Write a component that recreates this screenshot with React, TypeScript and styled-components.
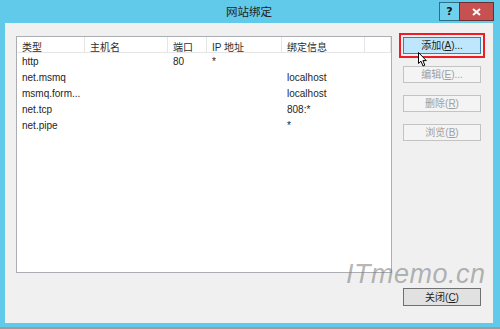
import React from "react";
import styled, { createGlobalStyle } from "styled-components";

const GlobalStyle = createGlobalStyle`
  html, body {
    margin: 0;
    padding: 0;
    background: #9c9c9c;
  }
  body {
    font-family: "Liberation Sans", "Noto Sans CJK SC", sans-serif;
    font-size: 10px;
    color: #1e1e1e;
  }
`;

interface Binding {
  type: string;
  host: string;
  port: string;
  ip: string;
  info: string;
}

const bindings: Binding[] = [
  { type: "http", host: "", port: "80", ip: "*", info: "" },
  { type: "net.msmq", host: "", port: "", ip: "", info: "localhost" },
  { type: "msmq.form...", host: "", port: "", ip: "", info: "localhost" },
  { type: "net.tcp", host: "", port: "", ip: "", info: "808:*" },
  { type: "net.pipe", host: "", port: "", ip: "", info: "*" },
];

const columns = ["类型", "主机名", "端口", "IP 地址", "绑定信息", ""];

export default function App() {
  return (
    <>
      <GlobalStyle />
      <SWindow>
        <STitleBar>
          <STitle>网站绑定</STitle>
          <SCaptionButtons>
            <SHelpButton>?</SHelpButton>
            <SCloseButton>
              <svg width="9" height="8" viewBox="0 0 9 8">
                <path d="M1 1 L8 7 M8 1 L1 7" stroke="#fff" strokeWidth="2" />
              </svg>
            </SCloseButton>
          </SCaptionButtons>
        </STitleBar>
        <SClient>
          <STopRow>
            <SList>
              <SGrid>
                {columns.map((c, i) => (
                  <SHeaderCell key={i}>{c}</SHeaderCell>
                ))}
                {bindings.map((b, r) => (
                  <React.Fragment key={r}>
                    <SCell>{b.type}</SCell>
                    <SCell>{b.host}</SCell>
                    <SCell>{b.port}</SCell>
                    <SCell>{b.ip}</SCell>
                    <SCell>{b.info}</SCell>
                    <SCell />
                  </React.Fragment>
                ))}
              </SGrid>
            </SList>
            <SButtonColumn>
              <SButton $active>
                添加(<u>A</u>)...
              </SButton>
              <SButton disabled>
                编辑(<u>E</u>)...
              </SButton>
              <SButton disabled>
                删除(<u>R</u>)
              </SButton>
              <SButton disabled>
                浏览(<u>B</u>)
              </SButton>
              <SCursor width="10" height="15" viewBox="0 0 10 15">
                <path
                  d="M0.5 0.5 L0.5 11.5 L3 9.2 L5 14 L6.8 13.2 L4.9 8.6 L8.3 8.6 Z"
                  fill="#fff"
                  stroke="#000"
                  strokeWidth="1"
                  strokeLinejoin="round"
                />
              </SCursor>
            </SButtonColumn>
          </STopRow>
          <SFooter>
            <SButton $tall>
              关闭(<u>C</u>)
            </SButton>
          </SFooter>
          <SWatermark>ITmemo.cn</SWatermark>
        </SClient>
      </SWindow>
    </>
  );
}

const SWindow = styled.div`
  width: 500px;
  height: 327px;
  background: #61c9ea;
  display: flex;
  flex-direction: column;
  box-sizing: border-box;
  padding: 0 7px 4px 5px;
`;

const STitleBar = styled.div`
  position: relative;
  height: 23px;
  flex: none;
  display: flex;
  align-items: center;
  justify-content: center;
`;

const STitle = styled.div`
  font-size: 11.5px;
  color: #222;
  margin-top: -1px;
`;

const SCaptionButtons = styled.div`
  position: absolute;
  right: -1px;
  top: 2px;
  display: flex;
`;

const SHelpButton = styled.div`
  width: 20px;
  height: 19px;
  box-sizing: border-box;
  border: 1px solid #2f6f86;
  border-right: none;
  background: #6fd0ee;
  display: flex;
  align-items: center;
  justify-content: center;
  font-family: "DejaVu Sans", sans-serif;
  font-weight: bold;
  font-size: 11px;
  color: #111;
`;

const SCloseButton = styled.div`
  width: 35px;
  height: 19px;
  box-sizing: border-box;
  border: 1px solid #6e2e2e;
  background: #c75050;
  display: flex;
  align-items: center;
  justify-content: center;
`;

const SClient = styled.div`
  position: relative;
  flex: 1;
  background: #f0f0f0;
  padding: 13px 12px 0 11px;
  display: flex;
  flex-direction: column;
`;

const STopRow = styled.div`
  display: flex;
  gap: 11px;
`;

const SList = styled.div`
  width: 376px;
  height: 237px;
  box-sizing: border-box;
  border: 1px solid #abadb3;
  background: #fff;
`;

const SGrid = styled.div`
  display: grid;
  grid-template-columns: 68px 83px 39px 75px 83px 1fr;
  grid-auto-rows: 16px;
  grid-template-rows: 16px;
`;

const SHeaderCell = styled.div`
  box-sizing: border-box;
  height: 16px;
  border-right: 1px solid #e5e5e5;
  border-bottom: 1px solid #e5e5e5;
  padding: 2px 0 0 5px;
  color: #2d2d2d;
  white-space: nowrap;
  &:last-of-type {
    border-right: none;
  }
`;

const SCell = styled.div`
  padding: 3px 0 0 5px;
  white-space: nowrap;
  overflow: hidden;
`;

const SButtonColumn = styled.div`
  position: relative;
  width: 78px;
  display: flex;
  flex-direction: column;
  gap: 12px;
  padding-top: 1px;
`;

const SButton = styled.button<{ $active?: boolean; $tall?: boolean }>`
  width: 78px;
  height: ${(p) => (p.$tall ? "18px" : "17px")};
  box-sizing: border-box;
  padding: 0;
  font-family: "Liberation Sans", "Noto Sans CJK SC", sans-serif;
  font-size: 10px;
  line-height: 15px;
  color: #1e1e1e;
  border: 1px solid ${(p) => (p.$active ? "#3c7fb1" : "#707070")};
  background: ${(p) => (p.$active ? "#bee6fd" : "#e1e1e1")};
  outline: ${(p) => (p.$active ? "2px solid #ee1c25" : "none")};
  outline-offset: 2px;
  &:disabled {
    color: #a0a0a0;
    border-color: #c3c3c3;
    background: #f4f4f4;
  }
  u {
    text-underline-offset: 1px;
  }
`;

const SCursor = styled.svg`
  position: absolute;
  left: 15px;
  top: 16px;
`;

const SFooter = styled.div`
  display: flex;
  justify-content: flex-end;
  margin-top: 15px;
`;

const SWatermark = styled.div`
  position: absolute;
  left: 341px;
  top: 238px;
  font-family: "Liberation Sans", sans-serif;
  font-style: italic;
  font-size: 27px;
  line-height: 27px;
  letter-spacing: 0.5px;
  color: rgba(120, 120, 120, 0.55);
  pointer-events: none;
`;
